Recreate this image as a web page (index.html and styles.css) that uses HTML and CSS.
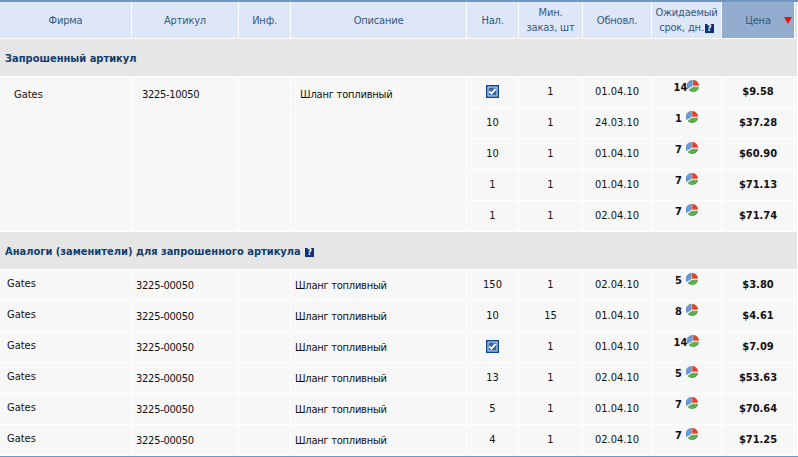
FILE: index.html
```html
<!DOCTYPE html>
<html lang="ru">
<head>
<meta charset="utf-8">
<title>Результаты поиска</title>
<link rel="stylesheet" href="styles.css">
</head>
<body>
<svg class="defs" width="0" height="0" aria-hidden="true">
  <symbol id="pie" viewBox="0 0 12 12">
    <path d="M5.2 0.3A5.7 5.7 0 0 0 0.6 8.6L5.2 5.8Z" fill="#6a9bd2" stroke="#44739f" stroke-width=".5"/>
    <path d="M6.2 0.1A5.8 5.8 0 0 1 11.9 5.6L6.2 5.6Z" fill="#e4432a" stroke="#c0341e" stroke-width=".3"/>
    <path d="M11.8 7.2A5.8 5.8 0 0 1 2 10L6 7.2Z" fill="#5bb04a" stroke="#3c8a30" stroke-width=".5"/>
  </symbol>
  <symbol id="check" viewBox="0 0 13 13">
    <rect width="13" height="13" fill="#0b4691"/>
    <rect x="1.5" y="1.5" width="10" height="10" fill="#dce8f7"/>
    <rect x="2.5" y="2.5" width="8" height="8" fill="#2f65ad"/>
    <path d="M3.4 6.4L5.5 8.6L9.6 3.8" fill="none" stroke="#fff" stroke-width="2"/>
  </symbol>
</svg>
<table class="grid">
  <colgroup>
    <col class="c1"><col class="c2"><col class="c3"><col class="c4"><col class="c5"><col class="c6"><col class="c7"><col class="c8"><col class="c9"><col class="c10">
  </colgroup>
  <thead>
    <tr>
      <th>Фирма</th><th>Артикул</th><th>Инф.</th><th>Описание</th><th>Нал.</th><th>Мин.<br>заказ, шт</th><th>Обновл.</th>
      <th>Ожидаемый<br>срок, дн.<span class="help">?</span></th>
      <th class="sorted">Цена<span class="arrow"></span></th><th class="edge"></th>
    </tr>
  </thead>
  <tbody>
    <tr class="section"><td colspan="10">Запрошенный артикул</td></tr>
    <tr>
      <td rowspan="5" class="top first-brand">Gates</td><td rowspan="5" class="top first-art">3225-10050</td><td rowspan="5"></td><td rowspan="5" class="top first-desc">Шланг топливный</td>
      <td class="mid"><svg class="cb"><use href="#check"/></svg></td><td class="mid">1</td><td class="mid">01.04.10</td>
      <td class="mid"><span class="term"><b>14</b><svg class="pie"><use href="#pie"/></svg></span></td><td class="mid price">$9.58</td><td></td>
    </tr>
    <tr><td class="mid">10</td><td class="mid">1</td><td class="mid">24.03.10</td><td class="mid"><span class="term"><b>1</b><svg class="pie gap"><use href="#pie"/></svg></span></td><td class="mid price">$37.28</td><td></td></tr>
    <tr><td class="mid">10</td><td class="mid">1</td><td class="mid">01.04.10</td><td class="mid"><span class="term"><b>7</b><svg class="pie gap"><use href="#pie"/></svg></span></td><td class="mid price">$60.90</td><td></td></tr>
    <tr><td class="mid">1</td><td class="mid">1</td><td class="mid">01.04.10</td><td class="mid"><span class="term"><b>7</b><svg class="pie gap"><use href="#pie"/></svg></span></td><td class="mid price">$71.13</td><td></td></tr>
    <tr><td class="mid">1</td><td class="mid">1</td><td class="mid">02.04.10</td><td class="mid"><span class="term"><b>7</b><svg class="pie gap"><use href="#pie"/></svg></span></td><td class="mid price">$71.74</td><td></td></tr>
    <tr class="section"><td colspan="10">Аналоги (заменители) для запрошенного артикула <span class="help">?</span></td></tr>
    <tr><td class="brand">Gates</td><td class="art">3225-00050</td><td></td><td class="art">Шланг топливный</td><td class="mid">150</td><td class="mid">1</td><td class="mid">02.04.10</td><td class="mid"><span class="term"><b>5</b><svg class="pie gap"><use href="#pie"/></svg></span></td><td class="mid price">$3.80</td><td></td></tr>
    <tr><td class="brand">Gates</td><td class="art">3225-00050</td><td></td><td class="art">Шланг топливный</td><td class="mid">10</td><td class="mid">15</td><td class="mid">01.04.10</td><td class="mid"><span class="term"><b>8</b><svg class="pie gap"><use href="#pie"/></svg></span></td><td class="mid price">$4.61</td><td></td></tr>
    <tr><td class="brand">Gates</td><td class="art">3225-00050</td><td></td><td class="art">Шланг топливный</td><td class="mid"><svg class="cb"><use href="#check"/></svg></td><td class="mid">1</td><td class="mid">01.04.10</td><td class="mid"><span class="term"><b>14</b><svg class="pie"><use href="#pie"/></svg></span></td><td class="mid price">$7.09</td><td></td></tr>
    <tr><td class="brand">Gates</td><td class="art">3225-00050</td><td></td><td class="art">Шланг топливный</td><td class="mid">13</td><td class="mid">1</td><td class="mid">02.04.10</td><td class="mid"><span class="term"><b>5</b><svg class="pie gap"><use href="#pie"/></svg></span></td><td class="mid price">$53.63</td><td></td></tr>
    <tr><td class="brand">Gates</td><td class="art">3225-00050</td><td></td><td class="art">Шланг топливный</td><td class="mid">5</td><td class="mid">1</td><td class="mid">01.04.10</td><td class="mid"><span class="term"><b>7</b><svg class="pie gap"><use href="#pie"/></svg></span></td><td class="mid price">$70.64</td><td></td></tr>
    <tr><td class="brand">Gates</td><td class="art">3225-00050</td><td></td><td class="art">Шланг топливный</td><td class="mid">4</td><td class="mid">1</td><td class="mid">02.04.10</td><td class="mid"><span class="term"><b>7</b><svg class="pie gap"><use href="#pie"/></svg></span></td><td class="mid price">$71.25</td><td></td></tr>
  </tbody>
</table>
</body>
</html>
```
FILE: styles.css
```css
html, body { margin: 0; padding: 0; background: #fff; overflow: hidden; }
.defs { position: absolute; }
.grid {
  table-layout: fixed;
  width: 798px;
  border-collapse: separate;
  border-spacing: 0;
  border-top: 2px solid #6f97bf;
  border-bottom: 2px solid #6f97bf;
  font: 11px/14px "DejaVu Sans Condensed", "Noto Sans", sans-serif;
  color: #111;
}
.c1 { width: 132px; } .c2 { width: 107px; } .c3 { width: 52px; } .c4 { width: 176px; }
.c5 { width: 52px; } .c6 { width: 64px; } .c7 { width: 69px; } .c8 { width: 70px; }
.c9 { width: 73px; } .c10 { width: 3px; }
th, td { padding: 0; border-right: 1px solid #fff; border-bottom: 1px solid #fff; box-sizing: border-box; }
th {
  height: 37px;
  background: #dde7f8;
  color: #34597f;
  font-weight: normal;
  letter-spacing: -0.2px;
  text-align: center;
  vertical-align: middle;
  line-height: 15px;
}
th.sorted { background: #92adcd; position: relative; }
.arrow {
  position: absolute; right: 2px; top: 15px;
  width: 0; height: 0;
  border-left: 4px solid transparent; border-right: 4px solid transparent;
  border-top: 7px solid #ee1111;
}
td { background: #f7f7f7; height: 31px; }
.section td {
  height: 38px;
  background: #e6e6e6;
  color: #0f3d6e;
  font-weight: bold;
  padding: 2px 0 0 5px;
}
.top { vertical-align: top; padding-top: 11px; }
.first-brand { padding-left: 14px; }
.first-art { padding-left: 10px; letter-spacing: -0.3px; }
.first-desc { padding-left: 9px; letter-spacing: -0.2px; }
.brand { padding-left: 7px; vertical-align: top; padding-top: 7px; }
.art { padding-left: 4px; vertical-align: top; padding-top: 9px; letter-spacing: -0.25px; }
.mid { text-align: center; vertical-align: middle; }
.price { font-weight: bold; }
.term { display: inline-flex; align-items: flex-start; position: relative; top: -5px; }
.term b { line-height: 14px; position: relative; top: 1px; }
.pie { width: 12px; height: 12px; }
.pie.gap { margin-left: 4px; }
.cb { width: 13px; height: 13px; display: block; margin: 0 auto; position: relative; top: -1px; }
.help {
  display: inline-block;
  width: 9px; height: 9px;
  margin-left: 1px;
  background: #0d2f7a;
  color: #fff;
  font: bold 8px/9px "DejaVu Sans", sans-serif;
  letter-spacing: 0;
  text-align: center;
}
```
